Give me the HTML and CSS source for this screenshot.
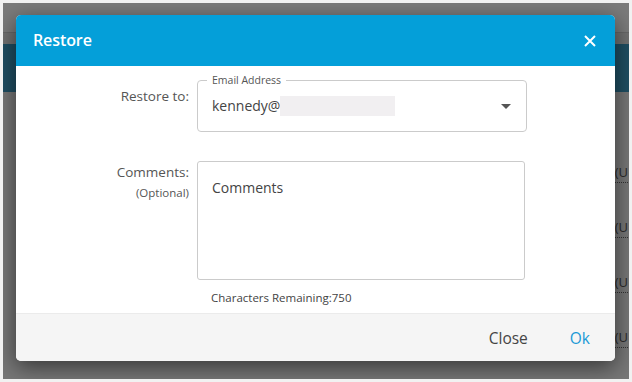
FILE: index.html
```html
<!DOCTYPE html>
<html>
<head>
<meta charset="utf-8">
<link rel="stylesheet" href="styles.css">
</head>
<body>
<div class="screen">
  <div class="page">
    <div class="topbar"></div>
    <div class="subbar"></div>
    <div class="banner"></div>
    <div class="rows">
      <div class="row"><span class="tz">(U</span></div>
      <div class="row"><span class="tz">(U</span></div>
      <div class="row"><span class="tz">(U</span></div>
      <div class="row"><span class="tz">(U</span></div>
    </div>
  </div>
  <div class="modal">
    <div class="modal-header">
      <h1 class="modal-title">Restore</h1>
      <button class="icon-close" aria-label="Close">
        <svg width="12" height="12" viewBox="0 0 12 12"><path d="M1 1L11 11M11 1L1 11" stroke="#fff" stroke-width="2" fill="none"/></svg>
      </button>
    </div>
    <div class="modal-body">
      <div class="form-grid">
        <div class="label label-restore">Restore to:</div>
        <div class="select-field">
          <span class="legend">Email Address</span>
          <span class="value">kennedy@</span><span class="redacted"></span>
          <span class="caret"></span>
        </div>
        <div class="label label-comments">Comments:<small>(Optional)</small></div>
        <div class="comments-col">
          <div class="textarea"><span class="placeholder">Comments</span></div>
          <div class="remaining">Characters Remaining:750</div>
        </div>
      </div>
    </div>
    <div class="modal-footer">
      <button class="btn btn-close">Close</button>
      <button class="btn btn-ok">Ok</button>
    </div>
  </div>
</div>
</body>
</html>
```
FILE: styles.css
```css
* { box-sizing: border-box; }
html, body { margin: 0; padding: 0; }
body {
  background: #f1f1f1;
  width: 632px;
  height: 382px;
  padding: 3px 3px 3px 3px;
  font-family: "Open Sans", "Noto Sans", sans-serif;
}
.screen {
  position: relative;
  width: 626px;
  height: 376px;
  overflow: hidden;
  background: #767676;
}
.page { display: flex; flex-direction: column; }
.topbar { height: 30px; background: #7b7b7b; border-bottom: 1px solid #676767; }
.subbar { height: 11px; background: #717171; }
.banner { height: 48px; background: #1f4e62; }
.rows { display: flex; flex-direction: column; padding-top: 71px; background: #777; }
.row {
  height: 55px;
  display: flex;
  justify-content: flex-end;
  padding-right: 1px;
}
.tz {
  font-size: 13px;
  color: #2a2a2a;
  border-bottom: 1px dotted #333;
  height: 20px;
  line-height: 18px;
}

.modal {
  position: absolute;
  left: 13px;
  top: 12px;
  width: 599px;
  height: 346px;
  background: #fff;
  border-radius: 5px;
  box-shadow: 0 6px 22px rgba(0,0,0,0.55);
  display: flex;
  flex-direction: column;
  overflow: hidden;
}
.modal-header {
  height: 51px;
  background: #049fd9;
  display: flex;
  align-items: center;
  justify-content: space-between;
  padding: 0 19px 0 17px;
}
.modal-title {
  margin: 0 0 2px 0;
  color: #fff;
  font-size: 16px;
  font-weight: 600;
  letter-spacing: -0.1px;
}
.icon-close {
  border: 0;
  background: none;
  padding: 0;
  width: 12px;
  height: 12px;
  display: flex;
}
.modal-body {
  flex: 1;
  padding: 14px 0 0 0;
}
.form-grid {
  display: grid;
  grid-template-columns: 173px 330px;
  column-gap: 8px;
  row-gap: 29px;
  align-items: start;
}
.label {
  text-align: right;
  color: #555;
  font-size: 13.5px;
  line-height: 20px;
}
.label-restore { padding-top: 6px; }
.label-comments { padding-top: 1px; }
.label small {
  display: block;
  font-size: 11.5px;
  line-height: 16px;
  margin-top: 3px;
}
.select-field {
  position: relative;
  height: 52px;
  border: 1px solid #cbcbcb;
  border-radius: 4px;
  display: flex;
  align-items: center;
  padding: 0 14px;
}
.legend {
  position: absolute;
  top: -8px;
  left: 9px;
  padding: 0 5px;
  background: #fff;
  font-size: 10.5px;
  line-height: 14px;
  color: #555;
}
.value {
  font-size: 14px;
  color: #444;
  line-height: 20px;
}
.redacted {
  width: 115px;
  height: 20px;
  background: #f1eff1;
}
.caret {
  margin-left: auto;
  margin-right: 1px;
  width: 0;
  height: 0;
  border-left: 5px solid transparent;
  border-right: 5px solid transparent;
  border-top: 5px solid #555;
}
.comments-col { display: flex; flex-direction: column; }
.textarea {
  width: 328px;
  height: 119px;
  border: 1px solid #cbcbcb;
  border-radius: 3px;
  padding: 14px 14px;
}
.placeholder { font-size: 14px; color: #444; line-height: 20px; }
.remaining {
  margin: 10px 0 0 14px;
  font-size: 11.5px;
  color: #444;
  line-height: 16px;
}
.modal-footer {
  height: 48px;
  background: #f5f5f5;
  border-top: 1px solid #ebebeb;
  display: flex;
  align-items: center;
  justify-content: flex-end;
  padding-right: 25px;
  gap: 42px;
}
.btn {
  border: 0;
  background: none;
  padding: 0;
  font-family: "Open Sans", "Noto Sans", sans-serif;
  font-size: 15.5px;
  line-height: 20px;
}
.btn-close { color: #444; }
.btn-ok { color: #1b9ad6; }
```
